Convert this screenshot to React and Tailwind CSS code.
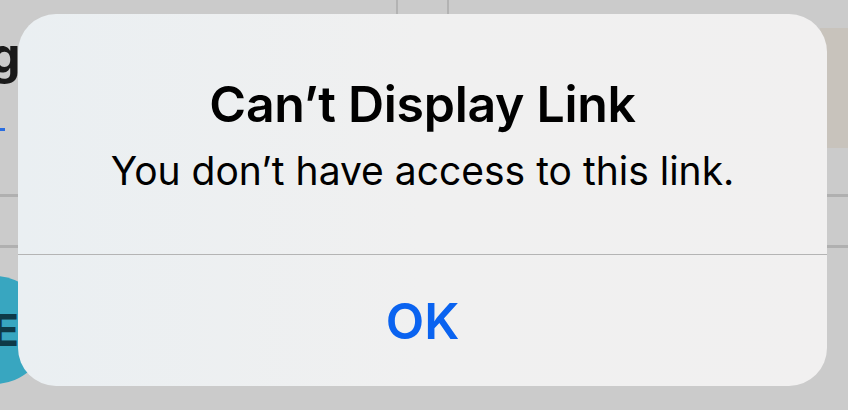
export default function App() {
  return (
    <div className="relative w-[848px] h-[410px] overflow-hidden bg-[#cbcbcb]" style={{ fontFamily: "Inter, 'Noto Sans', sans-serif" }}>
      {/* underlying page content, dimmed behind the alert */}
      <div className="absolute inset-0">
        <div className="absolute left-[396px] top-0 w-[2px] h-[16px] bg-[#b3b3b3]" />
        <div className="absolute left-[447px] top-0 w-[2px] h-[16px] bg-[#b3b3b3]" />
        <div className="absolute left-[-11px] top-[30px] text-[50px] font-bold text-[#1a1a1a] leading-none">g</div>
        <div className="absolute left-0 top-[128px] w-[5px] h-[3px] bg-[#2a6de0]" />
        <div className="absolute left-0 top-[194px] w-[20px] h-[3px] bg-[#b0b0b0]" />
        <div className="absolute left-0 top-[245px] w-[20px] h-[3px] bg-[#b0b0b0]" />
        <div className="absolute left-[820px] top-[28px] w-[28px] h-[120px] bg-[#c8c3bc]" />
        <div className="absolute left-[820px] top-[194px] w-[28px] h-[3px] bg-[#b0b0b0]" />
        <div className="absolute left-[820px] top-[245px] w-[28px] h-[3px] bg-[#b0b0b0]" />
        <div className="absolute left-[-60px] top-[276px] w-[108px] h-[108px] rounded-full bg-[#38a6c0] flex items-center justify-end pr-[29px]">
          <span className="text-[44px] font-bold text-[#0f3a48] leading-none">E</span>
        </div>
      </div>

      {/* alert dialog */}
      <div className="absolute left-[18px] top-[14px] w-[809px] h-[372px] rounded-[38px] bg-gradient-to-r from-[#eaeff2] via-[#f0f0f0] to-[#f1f0f0] flex flex-col">
        <div className="h-[240px] flex flex-col items-center pt-[62px]">
          <div className="text-[50px] font-semibold text-black leading-[56px] tracking-[-0.3px]">Can’t Display Link</div>
          <div className="text-[39px] text-black leading-[44px] mt-[17px]">You don’t have access to this link.</div>
        </div>
        <div className="h-[1px] bg-[#b4b4b4]" />
        <div className="flex-1 flex items-center justify-center">
          <span className="text-[50px] font-semibold text-[#0a63f0] leading-none">OK</span>
        </div>
      </div>
    </div>
  );
}
